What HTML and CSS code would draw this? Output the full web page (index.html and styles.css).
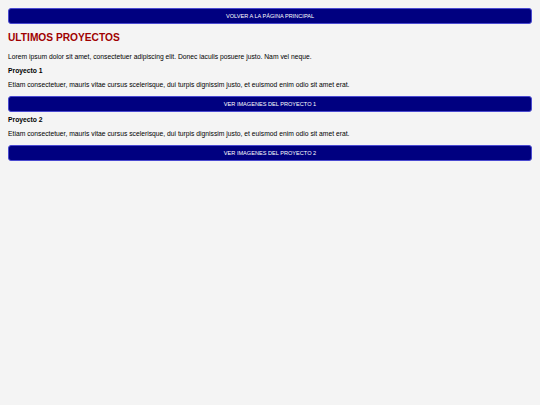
FILE: index.html
```html
<!DOCTYPE html>
<html lang="es">
<head>
    <meta charset="UTF-8">
    <title>Ultimos Proyectos</title>
    <link rel="stylesheet" href="styles.css">
</head>
<body>
    <a class="btn" href="index.html">VOLVER A LA PÁGINA PRINCIPAL</a>

    <h1>ULTIMOS PROYECTOS</h1>
    <p>Lorem ipsum dolor sit amet, consectetuer adipiscing elit. Donec iaculis posuere justo. Nam vel neque.</p>

    <div class="proyecto">
        <h2>Proyecto 1</h2>
        <p>Etiam consectetuer, mauris vitae cursus scelerisque, dui turpis dignissim justo, et euismod enim odio sit amet erat.</p>
        <a class="btn" href="proyecto1.html">VER IMAGENES DEL PROYECTO 1</a>
    </div>

    <div class="proyecto">
        <h2>Proyecto 2</h2>
        <p>Etiam consectetuer, mauris vitae cursus scelerisque, dui turpis dignissim justo, et euismod enim odio sit amet erat.</p>
        <a class="btn" href="proyecto2.html">VER IMAGENES DEL PROYECTO 2</a>
    </div>
</body>
</html>
```

FILE: styles.css
```css
html, body {
    background-color: #f4f4f4;
    color: #000000;
    font-family: "Liberation Sans", Arial, sans-serif;
    font-size: 6.75px;
    line-height: 8px;
    margin: 0;
}

body {
    padding: 8px;
}

.btn {
    display: block;
    height: 16px;
    line-height: 14px;
    box-sizing: border-box;
    background-color: #000080;
    border: 1px solid #4a4ad0;
    border-radius: 3px;
    color: #ffffff;
    text-align: center;
    text-decoration: none;
    font-size: 5.6px;
}

h1 {
    color: #a00000;
    font-size: 10.2px;
    line-height: 12px;
    margin: 8px 0 9px;
}

h2 {
    font-size: 6.75px;
    margin: 4px 0 6px;
}

p {
    margin: 6px 0;
}

.proyecto .btn {
    margin-top: 7px;
}
```
